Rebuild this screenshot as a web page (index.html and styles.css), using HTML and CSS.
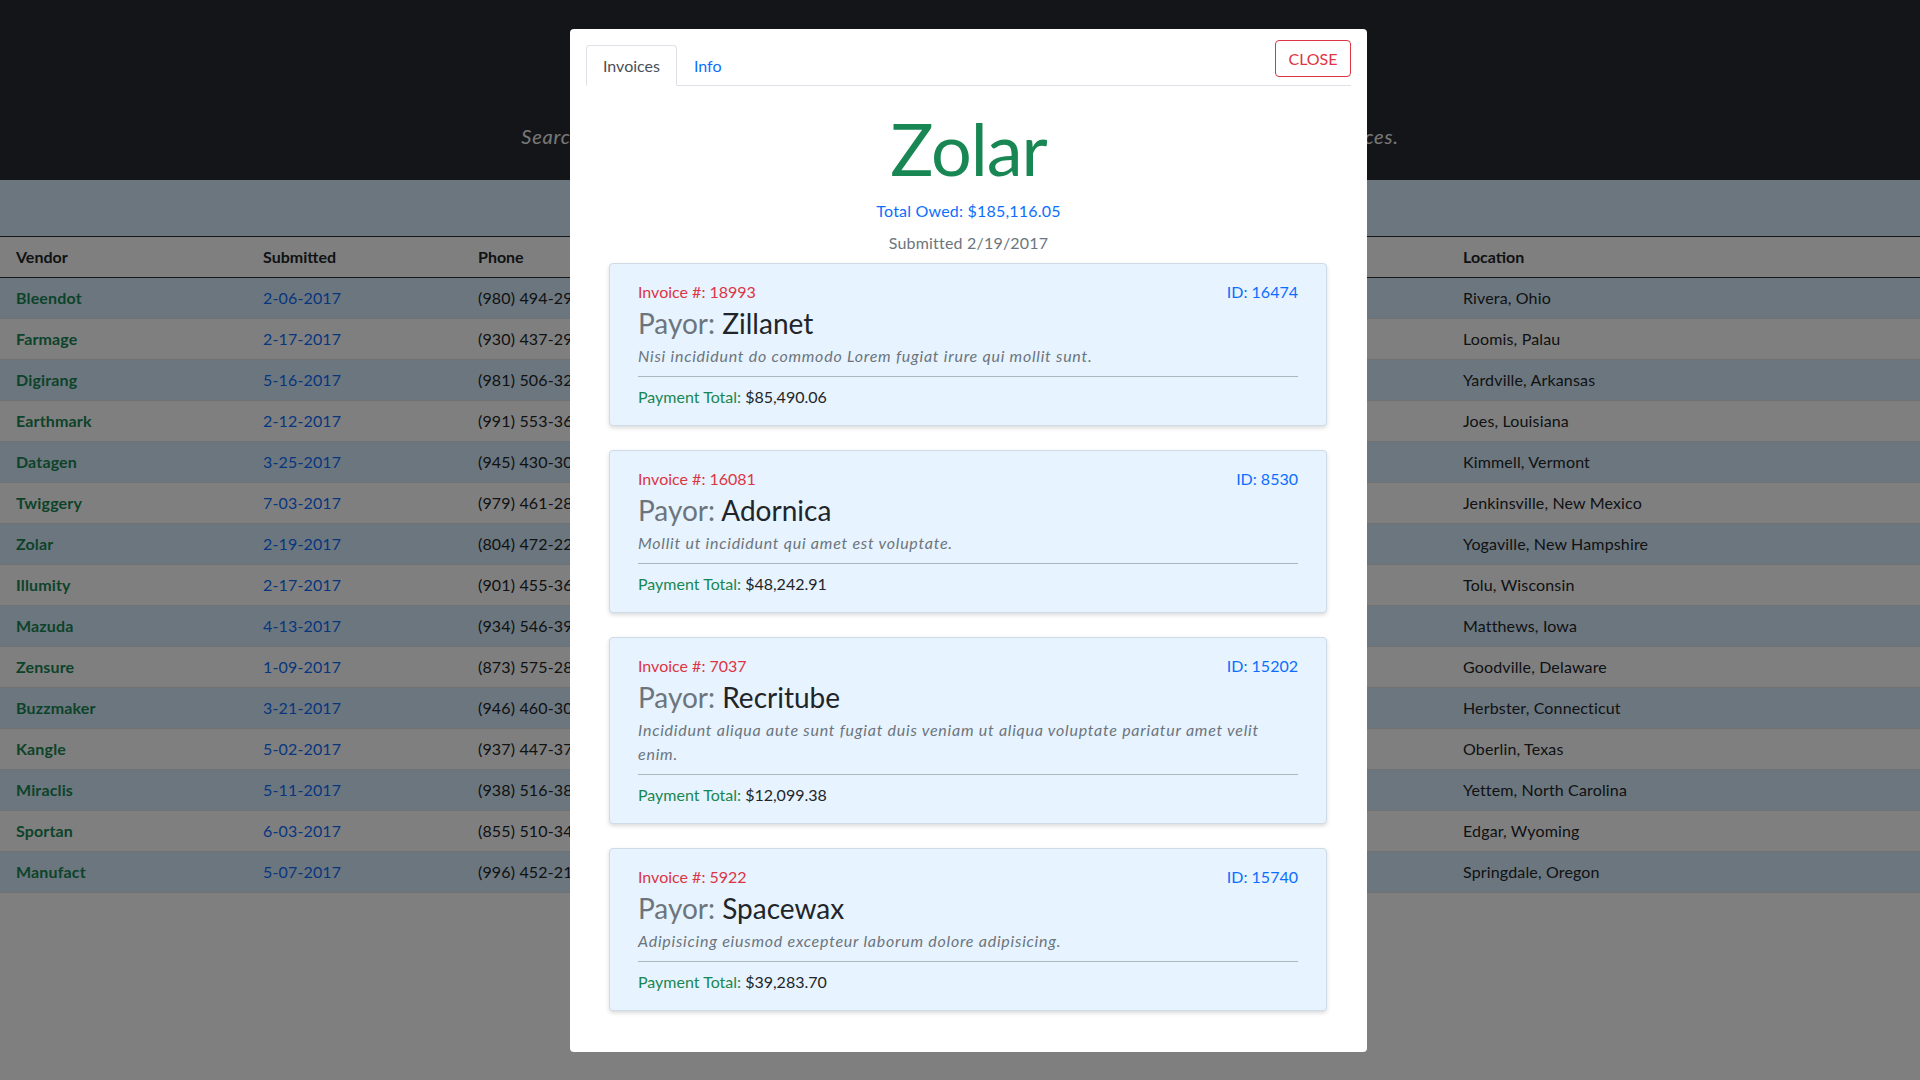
FILE: index.html
```html
<!DOCTYPE html>
<html lang="en">
<head>
<meta charset="utf-8">
<title>Vendor Invoices</title>
<link rel="stylesheet" href="styles.css">
</head>
<body>
<header class="hero">
  <h1 class="hero-title">Vendor Invoices</h1>
  <p class="hero-lead">Search through vendors by name, date submitted, or location and view their outstanding invoices.</p>
</header>
<section class="search-band">
  <input class="search-input" type="text" placeholder="Search vendors">
</section>
<table class="vendor-table">
  <colgroup>
    <col class="c-vendor"><col class="c-sub"><col class="c-phone"><col class="c-email"><col class="c-total"><col class="c-loc">
  </colgroup>
  <thead>
    <tr><th>Vendor</th><th>Submitted</th><th>Phone</th><th>Email</th><th>Total Owed</th><th>Location</th></tr>
  </thead>
  <tbody>
    <tr><td class="v">Bleendot</td><td class="d">2-06-2017</td><td>(980) 494-2914</td><td>info@bleendot.com</td><td>$98,120.44</td><td>Rivera, Ohio</td></tr>
    <tr><td class="v">Farmage</td><td class="d">2-17-2017</td><td>(930) 437-2951</td><td>info@farmage.com</td><td>$61,402.18</td><td>Loomis, Palau</td></tr>
    <tr><td class="v">Digirang</td><td class="d">5-16-2017</td><td>(981) 506-3217</td><td>info@digirang.com</td><td>$120,774.90</td><td>Yardville, Arkansas</td></tr>
    <tr><td class="v">Earthmark</td><td class="d">2-12-2017</td><td>(991) 553-3608</td><td>info@earthmark.com</td><td>$44,318.02</td><td>Joes, Louisiana</td></tr>
    <tr><td class="v">Datagen</td><td class="d">3-25-2017</td><td>(945) 430-3055</td><td>info@datagen.com</td><td>$77,980.61</td><td>Kimmell, Vermont</td></tr>
    <tr><td class="v">Twiggery</td><td class="d">7-03-2017</td><td>(979) 461-2874</td><td>info@twiggery.com</td><td>$35,210.77</td><td>Jenkinsville, New Mexico</td></tr>
    <tr><td class="v">Zolar</td><td class="d">2-19-2017</td><td>(804) 472-2231</td><td>info@zolar.com</td><td>$185,116.05</td><td>Yogaville, New Hampshire</td></tr>
    <tr><td class="v">Illumity</td><td class="d">2-17-2017</td><td>(901) 455-3642</td><td>info@illumity.com</td><td>$52,067.33</td><td>Tolu, Wisconsin</td></tr>
    <tr><td class="v">Mazuda</td><td class="d">4-13-2017</td><td>(934) 546-3990</td><td>info@mazuda.com</td><td>$88,451.26</td><td>Matthews, Iowa</td></tr>
    <tr><td class="v">Zensure</td><td class="d">1-09-2017</td><td>(873) 575-2818</td><td>info@zensure.com</td><td>$29,604.85</td><td>Goodville, Delaware</td></tr>
    <tr><td class="v">Buzzmaker</td><td class="d">3-21-2017</td><td>(946) 460-3066</td><td>info@buzzmaker.com</td><td>$140,332.10</td><td>Herbster, Connecticut</td></tr>
    <tr><td class="v">Kangle</td><td class="d">5-02-2017</td><td>(937) 447-3721</td><td>info@kangle.com</td><td>$63,009.47</td><td>Oberlin, Texas</td></tr>
    <tr><td class="v">Miraclis</td><td class="d">5-11-2017</td><td>(938) 516-3843</td><td>info@miraclis.com</td><td>$91,788.59</td><td>Yettem, North Carolina</td></tr>
    <tr><td class="v">Sportan</td><td class="d">6-03-2017</td><td>(855) 510-3412</td><td>info@sportan.com</td><td>$47,135.28</td><td>Edgar, Wyoming</td></tr>
    <tr><td class="v">Manufact</td><td class="d">5-07-2017</td><td>(996) 452-2187</td><td>info@manufact.com</td><td>$72,946.03</td><td>Springdale, Oregon</td></tr>
  </tbody>
</table>

<div class="backdrop"></div>
<div class="modal">
  <div class="modal-dialog">
    <div class="modal-head">
      <ul class="tabs">
        <li class="tab active">Invoices</li>
        <li class="tab">Info</li>
      </ul>
      <button class="close-btn" type="button">CLOSE</button>
    </div>
    <div class="summary">
      <h2 class="vendor-name">Zolar</h2>
      <p class="owed">Total Owed: $185,116.05</p>
      <p class="submitted">Submitted 2/19/2017</p>
    </div>
    <div class="invoices">
      <article class="invoice">
        <div class="inv-top"><span class="inv-num">Invoice #: 18993</span><span class="inv-id">ID: 16474</span></div>
        <h3 class="payor"><span class="payor-label">Payor:</span> Zillanet</h3>
        <p class="inv-desc">Nisi incididunt do commodo Lorem fugiat irure qui mollit sunt.</p>
        <hr class="inv-rule">
        <p class="inv-total"><span class="total-label">Payment Total:</span> $85,490.06</p>
      </article>
      <article class="invoice">
        <div class="inv-top"><span class="inv-num">Invoice #: 16081</span><span class="inv-id">ID: 8530</span></div>
        <h3 class="payor"><span class="payor-label">Payor:</span> Adornica</h3>
        <p class="inv-desc">Mollit ut incididunt qui amet est voluptate.</p>
        <hr class="inv-rule">
        <p class="inv-total"><span class="total-label">Payment Total:</span> $48,242.91</p>
      </article>
      <article class="invoice">
        <div class="inv-top"><span class="inv-num">Invoice #: 7037</span><span class="inv-id">ID: 15202</span></div>
        <h3 class="payor"><span class="payor-label">Payor:</span> Recritube</h3>
        <p class="inv-desc">Incididunt aliqua aute sunt fugiat duis veniam ut aliqua voluptate pariatur amet velit enim.</p>
        <hr class="inv-rule">
        <p class="inv-total"><span class="total-label">Payment Total:</span> $12,099.38</p>
      </article>
      <article class="invoice">
        <div class="inv-top"><span class="inv-num">Invoice #: 5922</span><span class="inv-id">ID: 15740</span></div>
        <h3 class="payor"><span class="payor-label">Payor:</span> Spacewax</h3>
        <p class="inv-desc">Adipisicing eiusmod excepteur laborum dolore adipisicing.</p>
        <hr class="inv-rule">
        <p class="inv-total"><span class="total-label">Payment Total:</span> $39,283.70</p>
      </article>
    </div>
  </div>
</div>
</body>
</html>
```

FILE: styles.css
```css
* { box-sizing: border-box; }
html, body { margin: 0; padding: 0; }
body {
  font-family: "Lato", "Noto Sans", sans-serif;
  font-size: 16px;
  line-height: 24px;
  color: #212529;
  background: #ffffff;
  width: 1920px;
  height: 1080px;
  overflow: hidden;
}

/* Header */
.hero {
  background: #292b30;
  height: 180px;
  display: flex;
  flex-direction: column;
  align-items: center;
  justify-content: flex-end;
  padding-bottom: 29px;
}
.hero-title {
  margin: 0 0 20px;
  font-size: 40px;
  line-height: 48px;
  font-weight: 300;
  color: #ffffff;
}
.hero-lead {
  margin: 0;
  font-size: 20px;
  line-height: 30px;
  font-style: italic;
  font-weight: 400;
  letter-spacing: 0.78px;
  white-space: nowrap;
  color: #eef0f2;
}

/* Search band */
.search-band {
  background: #d8edfd;
  height: 56px;
  display: flex;
  align-items: center;
  justify-content: center;
}
.search-input {
  width: 480px;
  height: 36px;
  border: 1px solid #ced4da;
  border-radius: 4px;
  padding: 0 12px;
  font: inherit;
}

/* Table */
.vendor-table {
  width: 1920px;
  border-collapse: collapse;
  table-layout: fixed;
}
.c-vendor { width: 247px; }
.c-sub { width: 215px; }
.c-phone { width: 250px; }
.c-email { width: 400px; }
.c-total { width: 335px; }
.c-loc { width: 473px; }
.vendor-table th {
  text-align: left;
  font-weight: 700;
  padding: 8px 16px;
  background: #ffffff;
  border-top: 1px solid #2b2f33;
  border-bottom: 1px solid #2b2f33;
  white-space: nowrap;
}
.vendor-table td {
  padding: 8px 16px;
  border-bottom: 1px solid #dee2e6;
  white-space: nowrap;
  overflow: hidden;
  letter-spacing: 0.15px;
}
.vendor-table tbody tr:nth-child(odd) { background: #d8edfd; }
.vendor-table tbody tr:nth-child(even) { background: #ffffff; }
.vendor-table td.v { color: #198754; font-weight: 700; }
.vendor-table td.d { color: #0d6efd; }

/* Modal */
.backdrop {
  position: fixed;
  inset: 0;
  background: rgba(0, 0, 0, 0.5);
}
.modal {
  position: fixed;
  inset: 0;
}
.modal-dialog {
  position: relative;
  width: 797px;
  margin: 29px 0 0 570px;
  background: #ffffff;
  border-radius: 4px;
  padding: 16px 16px 17px;
}
.modal-head {
  position: relative;
}
.tabs {
  list-style: none;
  margin: 0;
  padding: 0;
  display: flex;
  border-bottom: 1px solid #dee2e6;
}
.tab {
  padding: 8px 16px;
  height: 41px;
  border: 1px solid transparent;
  border-top-left-radius: 4px;
  border-top-right-radius: 4px;
  margin-bottom: -1px;
  color: #0d6efd;
}
.tab.active {
  color: #495057;
  border-color: #dee2e6 #dee2e6 #ffffff;
  background: #ffffff;
}
.close-btn {
  position: absolute;
  top: -5px;
  right: 0;
  width: 76px;
  height: 37px;
  background: #ffffff;
  border: 1px solid #dc3545;
  border-radius: 4px;
  color: #dc3545;
  font: inherit;
  padding: 0;
}

.summary {
  text-align: center;
}
.vendor-name {
  margin: 19px 0 8px;
  font-size: 72px;
  line-height: 86px;
  font-weight: 400;
  letter-spacing: -1px;
  color: #198754;
}
.owed {
  margin: 0 0 8px;
  color: #0d6efd;
  letter-spacing: 0.2px;
}
.submitted {
  margin: 0 0 8px;
  color: #6c757d;
  letter-spacing: 0.2px;
}

.invoices {
  padding: 0 24px 0 23px;
}
.invoice {
  background: #e7f3fe;
  border: 1px solid #cfdbe6;
  border-radius: 4px;
  box-shadow: 0 2px 4px rgba(0, 0, 0, 0.15);
  padding: 16px 28px 16px;
  margin-bottom: 24px;
}
.inv-top {
  display: flex;
  justify-content: space-between;
}
.inv-num { color: #dc3545; }
.inv-id { color: #0d6efd; }
.payor {
  margin: 2px 0 4px;
  font-size: 28px;
  line-height: 34px;
  font-weight: 400;
  color: #212529;
}
.payor-label { color: #6c757d; }
.inv-desc {
  margin: 0;
  font-style: italic;
  letter-spacing: 0.75px;
  color: #6c757d;
}
.inv-rule {
  margin: 8px 0;
  border: 0;
  border-top: 1px solid #adb5bd;
}
.inv-total {
  margin: 0;
  color: #212529;
}
.total-label { color: #198754; }
```
